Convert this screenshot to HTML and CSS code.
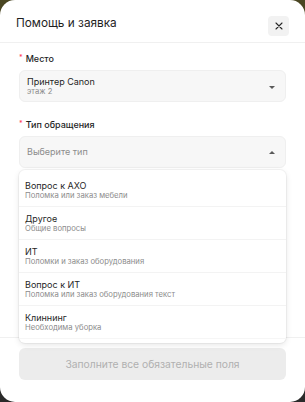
FILE: index.html
```html
<!DOCTYPE html>
<html lang="ru">
<head>
	<meta charset="UTF-8">
	<title>Помощь и заявка</title>
	<link rel="stylesheet" href="styles.css">
</head>
<body>
	<div class="modal">
		<div class="modal-head">
			<h1 class="modal-title">Помощь и заявка</h1>
			<a href="javascript:;" class="close">
				<svg width="8" height="8" viewBox="0 0 8 8"><path d="M1 1L7 7M7 1L1 7" stroke="#262626" stroke-width="1.1" stroke-linecap="round"/></svg>
			</a>
		</div>
		<div class="modal-body">
			<div class="field">
				<div class="label"><span class="req">*</span>Место</div>
				<div class="select">
					<div class="select-value">
						<div class="select-main">Принтер Canon</div>
						<div class="select-sub">этаж 2</div>
					</div>
					<span class="caret"></span>
				</div>
			</div>
			<div class="field">
				<div class="label"><span class="req">*</span>Тип обращения</div>
				<div class="select open">
					<div class="select-value">
						<div class="placeholder">Выберите тип</div>
					</div>
					<span class="caret up"></span>
				</div>
				<div class="dropdown">
					<div class="option">
						<div class="option-title">Вопрос к АХО</div>
						<div class="option-sub">Поломка или заказ мебели</div>
					</div>
					<div class="option">
						<div class="option-title">Другое</div>
						<div class="option-sub">Общие вопросы</div>
					</div>
					<div class="option">
						<div class="option-title">ИТ</div>
						<div class="option-sub">Поломки и заказ оборудования</div>
					</div>
					<div class="option">
						<div class="option-title">Вопрос к ИТ</div>
						<div class="option-sub">Поломка или заказ оборудования текст</div>
					</div>
					<div class="option">
						<div class="option-title">Клиннинг</div>
						<div class="option-sub">Необходима уборка</div>
					</div>
				</div>
			</div>
		</div>
		<div class="modal-foot">
			<button class="submit" disabled>Заполните все обязательные поля</button>
		</div>
	</div>
</body>
</html>
```

FILE: styles.css
```css
*{
	margin: 0;
	padding: 0;
	box-sizing: border-box;
	text-decoration: none;
}
body{
	width: 305px;
	height: 402px;
	overflow: hidden;
	background: linear-gradient(180deg, #4a4622 0%, #3a3826 50%, #2a2a2a 100%);
	font-family: Inter, "Noto Sans", sans-serif;
	color: #1f1f1f;
}
.modal{
	width: 305px;
	height: 402px;
	background: #fff;
	border-radius: 15px;
	display: flex;
	flex-direction: column;
}
.modal-head{
	height: 43px;
	padding: 0 16px;
	border-bottom: 1px solid #f0f0f0;
	display: flex;
	justify-content: space-between;
	align-items: flex-start;
}
.modal-title{
	margin-top: 15px;
	font-size: 11.8px;
	line-height: 16px;
	font-weight: 400;
}
.close{
	margin-top: 16px;
	width: 21px;
	height: 20px;
	border-radius: 4px;
	background: #f2f2f2;
	display: flex;
	align-items: center;
	justify-content: center;
}
.modal-body{
	flex: 1;
	padding: 9px 19px 0;
}
.field{
	position: relative;
	margin-bottom: 16px;
}
.label{
	font-size: 9px;
	line-height: 14px;
	font-weight: 500;
	margin-bottom: 4px;
}
.req{
	color: #ff3b5c;
	font-size: 7px;
	margin-right: 3px;
	vertical-align: top;
	line-height: 12px;
}
.select{
	height: 32px;
	border: 1px solid #efefef;
	border-radius: 6px;
	background: #f7f7f7;
	padding: 0 10px 0 7px;
	display: flex;
	align-items: center;
	justify-content: space-between;
}
.select-main{
	font-size: 9px;
	line-height: 11px;
}
.select-sub{
	font-size: 7.7px;
	line-height: 10px;
	color: #8c8c8c;
}
.placeholder{
	font-size: 9px;
	line-height: 12px;
	color: #8c8c8c;
}
.caret{
	width: 0;
	height: 0;
	border-left: 3.5px solid transparent;
	border-right: 3.5px solid transparent;
	border-top: 3.5px solid #595959;
	margin-top: 2px;
}
.caret.up{
	border-top: 0;
	border-bottom: 3.5px solid #595959;
	margin-top: 0;
}
.dropdown{
	position: absolute;
	left: 0;
	right: 0;
	top: calc(100% + 2px);
	z-index: 2;
	background: #fff;
	border-radius: 6px;
	padding: 4px 0;
	box-shadow: 0 2px 6px rgba(0,0,0,.10), 0 0 0 1px rgba(0,0,0,.04);
}
.option{
	height: 33px;
	padding: 6px 6px 0;
	border-bottom: 1px solid #f3f3f3;
}
.option:last-child{
	border-bottom: 1px solid #f6f6f6;
}
.option-title{
	font-size: 9px;
	line-height: 11px;
}
.option-sub{
	font-size: 7.7px;
	line-height: 10px;
	color: #8c8c8c;
}
.modal-foot{
	border-top: 1px solid #f0f0f0;
	padding: 10px 19px 22px;
}
.submit{
	width: 100%;
	height: 32px;
	border: 0;
	border-radius: 6px;
	background: #ececec;
	color: #b0b0b0;
	font-family: Inter, "Noto Sans", sans-serif;
	font-size: 10.3px;
}
```
